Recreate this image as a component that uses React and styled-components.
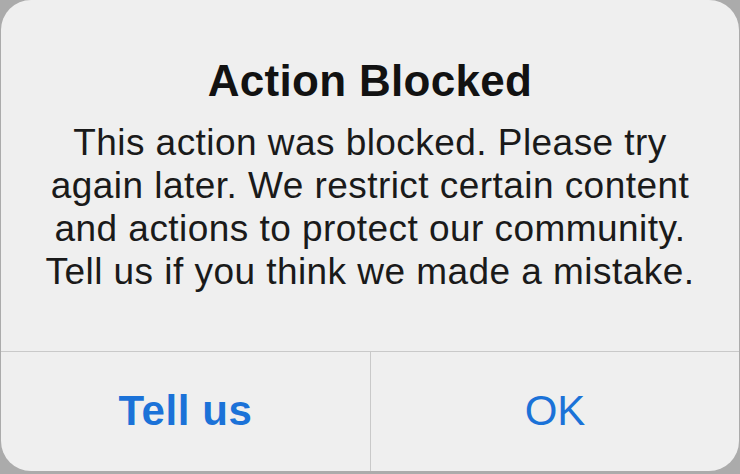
import React from "react";
import styled, { createGlobalStyle } from "styled-components";

const Global = createGlobalStyle`
  html, body { margin: 0; padding: 0; background: #ababab; }
  body { width: 740px; height: 474px; overflow: hidden; font-family: "Liberation Sans", Arial, sans-serif; }
`;

const Backdrop = styled.div`
  width: 740px;
  height: 474px;
  padding: 0 1px 3px 1px;
  box-sizing: border-box;
  display: flex;
`;

const Dialog = styled.div`
  flex: 1;
  background: #efefef;
  border-radius: 30px;
  display: flex;
  flex-direction: column;
  overflow: hidden;
`;

const Body = styled.div`
  height: 351px;
  box-sizing: border-box;
  padding-top: 55px;
  display: flex;
  flex-direction: column;
  align-items: center;
  text-align: center;
`;

const Title = styled.h1`
  margin: 0;
  font-size: 44px;
  line-height: 52px;
  font-weight: 700;
  color: #121212;
  letter-spacing: 0.3px;
`;

const Message = styled.p`
  margin: 14px 0 0;
  font-size: 37px;
  line-height: 43px;
  color: #1a1a1a;
  letter-spacing: 0.45px;
`;

const ButtonRow = styled.div`
  flex: 1;
  display: grid;
  grid-template-columns: 369px 1fr;
  border-top: 1px solid #c9c9c9;
`;

const ActionButton = styled.button`
  border: none;
  background: transparent;
  font-family: "Liberation Sans", Arial, sans-serif;
  font-size: 42px;
  font-weight: ${(p) => (p.$primary ? 700 : 400)};
  letter-spacing: ${(p) => (p.$primary ? "0.6px" : "0")};
  color: #1b72d8;
  display: flex;
  align-items: center;
  justify-content: center;
  padding: 0 0 2px;
  & + & { border-left: 1px solid #c9c9c9; }
`;

export default function App() {
  return (
    <>
      <Global />
      <Backdrop>
        <Dialog>
          <Body>
            <Title>Action Blocked</Title>
            <Message>
              This action was blocked. Please try
              <br />
              again later. We restrict certain content
              <br />
              and actions to protect our community.
              <br />
              Tell us if you think we made a mistake.
            </Message>
          </Body>
          <ButtonRow>
            <ActionButton $primary>Tell us</ActionButton>
            <ActionButton>OK</ActionButton>
          </ButtonRow>
        </Dialog>
      </Backdrop>
    </>
  );
}
